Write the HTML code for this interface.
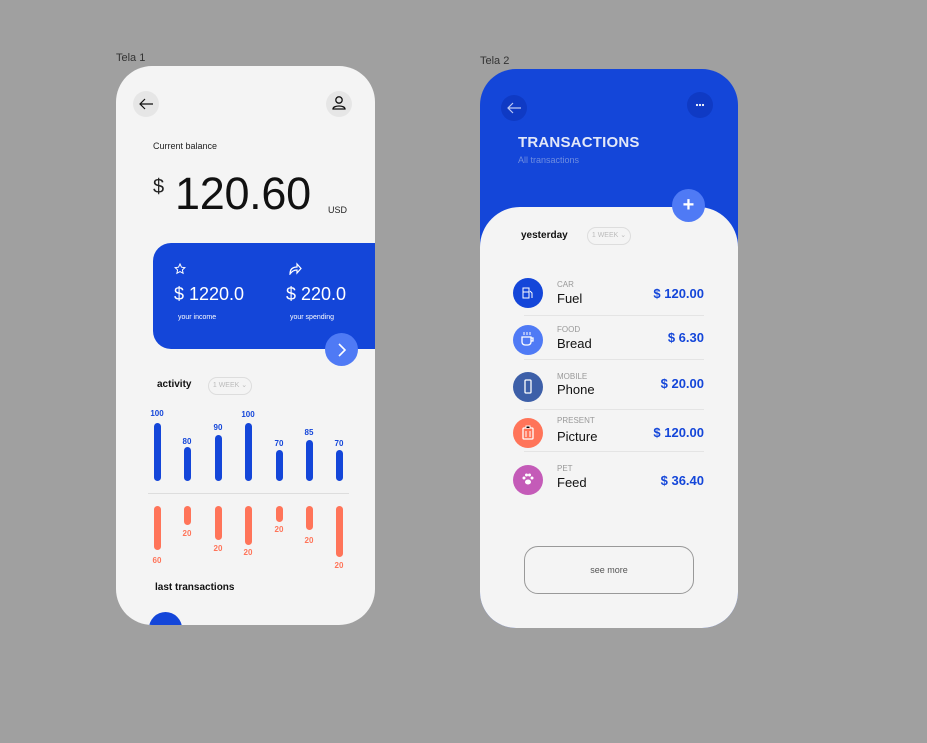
<!DOCTYPE html>
<html><head><meta charset="utf-8"><style>
*{margin:0;padding:0;box-sizing:border-box}
body{width:927px;height:743px;background:#a0a0a0;position:relative;overflow:hidden;font-family:"Liberation Sans",sans-serif}
.a{position:absolute}
.lbl{font-size:11px;color:#333}
.ph{background:#f4f4f4;border-radius:36px;overflow:hidden}
.bb{width:7px;border-radius:4px;background:#1446d9}
.ob{width:7px;border-radius:4px;background:#ff7459}
.bn{font-size:8px;font-weight:bold;color:#1446d9;width:30px;text-align:center}
.on{font-size:8px;font-weight:bold;color:#ff7459;width:30px;text-align:center}
.ic{width:30px;height:30px;border-radius:50%}
.cat{font-size:8px;color:#999}
.nm{font-size:13px;color:#111}
.amt{font-size:13px;font-weight:bold;color:#1446d9;text-align:right;width:100px}
.sep{height:1px;background:#e4e4e4;width:180px}
.wk{border:1px solid #ddd;border-radius:9px;font-size:7px;color:#bbb;text-align:center;line-height:16px;height:18px;width:44px}
</style></head><body>
<div class="a lbl" style="left:116px;top:52px">Tela 1</div>
<div class="a lbl" style="left:480px;top:55px">Tela 2</div>

<div class="a ph" style="left:116px;top:66px;width:259px;height:559px">
 <div class="a" style="left:17px;top:25px;width:26px;height:26px;border-radius:50%;background:#e6e6e6"></div>
 <svg class="a" style="left:22px;top:31px" width="16" height="14"><path d="M15 7H2M7 2L2 7l5 5" stroke="#111" stroke-width="1.2" fill="none"/></svg>
 <div class="a" style="left:210px;top:25px;width:26px;height:26px;border-radius:50%;background:#e6e6e6"></div>
 <svg class="a" style="left:215px;top:29px" width="16" height="16"><circle cx="8" cy="5" r="3.2" stroke="#111" stroke-width="1.3" fill="none"/><path d="M2 14c0-4 12-4 12 0z" stroke="#111" stroke-width="1.3" fill="none"/></svg>
 <div class="a" style="left:37px;top:75px;font-size:9px;color:#222">Current balance</div>
 <div class="a" style="left:37px;top:110px;font-size:20px;color:#222">$</div>
 <div class="a" style="left:59px;top:102px;font-size:45px;color:#111;letter-spacing:-0.3px">120.60</div>
 <div class="a" style="left:212px;top:139px;font-size:9px;color:#222">USD</div>
 <div class="a" style="left:37px;top:177px;width:240px;height:106px;background:#1446d9;border-radius:18px 0 0 18px"></div>
 <svg class="a" style="left:58px;top:197px" width="12" height="12"><path d="M6 1l1.5 3.2 3.4.4-2.5 2.3.7 3.4L6 8.6 2.9 10.3l.7-3.4L1.1 4.6l3.4-.4z" stroke="#fff" fill="none"/></svg>
 <svg class="a" style="left:172px;top:196px" width="14" height="13"><path d="M2 12c0-5 3-7 7-7V2l4 4.5-4 4.5V8c-3 0-5 1-7 4z" stroke="#fff" fill="none" stroke-width="1.2"/></svg>
 <div class="a" style="left:58px;top:218px;font-size:18px;color:#fff">$ 1220.0</div>
 <div class="a" style="left:170px;top:218px;font-size:18px;color:#fff">$ 220.0</div>
 <div class="a" style="left:62px;top:248px;font-size:7px;color:#fff">your income</div>
 <div class="a" style="left:174px;top:248px;font-size:7px;color:#fff">your spending</div>
 <div class="a" style="left:209px;top:267px;width:33px;height:33px;border-radius:50%;background:#4f7af5"></div>
 <svg class="a" style="left:219px;top:276px" width="14" height="16"><path d="M4 2l6 6-6 6" stroke="#fff" stroke-width="1.6" fill="none"/></svg>
 <div class="a" style="left:41px;top:313px;font-size:10px;font-weight:bold;color:#111">activity</div>
 <div class="a wk" style="left:92px;top:311px">1 WEEK ⌄</div>

 <div class="a bn" style="left:26px;top:343px">100</div><div class="a bb" style="left:38px;top:357px;height:58px"></div>
 <div class="a bn" style="left:56px;top:371px">80</div><div class="a bb" style="left:68px;top:381px;height:34px"></div>
 <div class="a bn" style="left:87px;top:357px">90</div><div class="a bb" style="left:99px;top:369px;height:46px"></div>
 <div class="a bn" style="left:117px;top:344px">100</div><div class="a bb" style="left:129px;top:357px;height:58px"></div>
 <div class="a bn" style="left:148px;top:373px">70</div><div class="a bb" style="left:160px;top:384px;height:31px"></div>
 <div class="a bn" style="left:178px;top:362px">85</div><div class="a bb" style="left:190px;top:374px;height:41px"></div>
 <div class="a bn" style="left:208px;top:373px">70</div><div class="a bb" style="left:220px;top:384px;height:31px"></div>

 <div class="a" style="left:32px;top:427px;width:201px;height:1px;background:#ddd"></div>

 <div class="a ob" style="left:38px;top:440px;height:44px"></div><div class="a on" style="left:26px;top:490px">60</div>
 <div class="a ob" style="left:68px;top:440px;height:19px"></div><div class="a on" style="left:56px;top:463px">20</div>
 <div class="a ob" style="left:99px;top:440px;height:34px"></div><div class="a on" style="left:87px;top:478px">20</div>
 <div class="a ob" style="left:129px;top:440px;height:39px"></div><div class="a on" style="left:117px;top:482px">20</div>
 <div class="a ob" style="left:160px;top:440px;height:16px"></div><div class="a on" style="left:148px;top:459px">20</div>
 <div class="a ob" style="left:190px;top:440px;height:24px"></div><div class="a on" style="left:178px;top:470px">20</div>
 <div class="a ob" style="left:220px;top:440px;height:51px"></div><div class="a on" style="left:208px;top:495px">20</div>

 <div class="a" style="left:39px;top:516px;font-size:10px;font-weight:bold;color:#111">last transactions</div>
 <div class="a" style="left:33px;top:546px;width:33px;height:33px;border-radius:50%;background:#1446d9"></div>
</div>

<div class="a ph" style="left:480px;top:69px;width:258px;height:559px;background:#1446d9">
 <div class="a" style="left:21px;top:26px;width:26px;height:26px;border-radius:50%;background:#0f3ac4"></div>
 <svg class="a" style="left:26px;top:32px" width="16" height="14"><path d="M15 7H2M7 2L2 7l5 5" stroke="#bcc9f5" stroke-width="1.2" fill="none"/></svg>
 <div class="a" style="left:207px;top:23px;width:26px;height:26px;border-radius:50%;background:#0f3ac4"></div>
 <svg class="a" style="left:207px;top:23px" width="26" height="26"><circle cx="10" cy="13" r="1.1" fill="#fff"/><circle cx="13" cy="13" r="1.1" fill="#fff"/><circle cx="16" cy="13" r="1.1" fill="#fff"/></svg>
 <div class="a" style="left:38px;top:65px;font-size:15px;color:#e3e8f8;font-weight:bold;letter-spacing:0.2px">TRANSACTIONS</div>
 <div class="a" style="left:38px;top:86px;font-size:9px;color:#6f8de0">All transactions</div>
 <div class="a" style="left:0;top:138px;width:258px;height:430px;background:#f4f4f4;border-radius:40px 40px 36px 36px"></div>
 <div class="a" style="left:192px;top:120px;width:33px;height:33px;border-radius:50%;background:#4f7af5;color:#fff;font-size:20px;font-weight:bold;text-align:center;line-height:32px">+</div>
 <div class="a" style="left:41px;top:161px;font-size:10px;font-weight:bold;color:#111">yesterday</div>
 <div class="a wk" style="left:107px;top:158px">1 WEEK ⌄</div>

 <div class="a ic" style="left:33px;top:209px;background:#1446d9"></div>
 <svg class="a" style="left:42px;top:218px" width="12" height="12"><rect x="1" y="1" width="6" height="10" stroke="#fff" fill="none"/><path d="M1 5h6M8 4l2 2v5" stroke="#fff" fill="none"/></svg>
 <div class="a cat" style="left:77px;top:211px">CAR</div><div class="a nm" style="left:77px;top:222px">Fuel</div>
 <div class="a amt" style="left:124px;top:217px">$ 120.00</div>
 <div class="a sep" style="left:44px;top:246px"></div>

 <div class="a ic" style="left:33px;top:256px;background:#4f7af5"></div>
 <svg class="a" style="left:40px;top:262px" width="16" height="16"><path d="M2 6h9v5a3 3 0 0 1-3 3H5a3 3 0 0 1-3-3z M11 7h2v3h-2" stroke="#fff" fill="none" stroke-width="1.3"/><path d="M4 1v3M7 1v3M10 1v3" stroke="#fff"/></svg>
 <div class="a cat" style="left:77px;top:256px">FOOD</div><div class="a nm" style="left:77px;top:267px">Bread</div>
 <div class="a amt" style="left:124px;top:261px">$ 6.30</div>
 <div class="a sep" style="left:44px;top:290px"></div>

 <div class="a ic" style="left:33px;top:303px;background:#3d5fa8"></div>
 <svg class="a" style="left:43px;top:310px" width="10" height="16"><rect x="2" y="1" width="6" height="13" rx="1" stroke="#fff" fill="none" stroke-width="1.3"/></svg>
 <div class="a cat" style="left:77px;top:303px">MOBILE</div><div class="a nm" style="left:77px;top:313px">Phone</div>
 <div class="a amt" style="left:124px;top:307px">$ 20.00</div>
 <div class="a sep" style="left:44px;top:340px"></div>

 <div class="a ic" style="left:33px;top:349px;background:#ff7459"></div>
 <svg class="a" style="left:42px;top:356px" width="12" height="16"><rect x="1" y="3" width="10" height="11" rx="1" stroke="#fff" fill="none" stroke-width="1.3"/><path d="M4 3V1h4v2M4 6v6M8 6v6" stroke="#fff"/></svg>
 <div class="a cat" style="left:77px;top:347px">PRESENT</div><div class="a nm" style="left:77px;top:360px">Picture</div>
 <div class="a amt" style="left:124px;top:356px">$ 120.00</div>
 <div class="a sep" style="left:44px;top:382px"></div>

 <div class="a ic" style="left:33px;top:396px;background:#c45bb8"></div>
 <svg class="a" style="left:41px;top:403px" width="14" height="14"><circle cx="3" cy="6" r="1.5" fill="#fff"/><circle cx="11" cy="6" r="1.5" fill="#fff"/><circle cx="5.5" cy="3" r="1.5" fill="#fff"/><circle cx="8.5" cy="3" r="1.5" fill="#fff"/><ellipse cx="7" cy="10" rx="3" ry="2.5" fill="#fff"/></svg>
 <div class="a cat" style="left:77px;top:395px">PET</div><div class="a nm" style="left:77px;top:406px">Feed</div>
 <div class="a amt" style="left:124px;top:404px">$ 36.40</div>

 <div class="a" style="left:44px;top:477px;width:170px;height:48px;border:1px solid #999;border-radius:14px;text-align:center;line-height:46px;font-size:9px;color:#555">see more</div>
</div>
</body></html>
